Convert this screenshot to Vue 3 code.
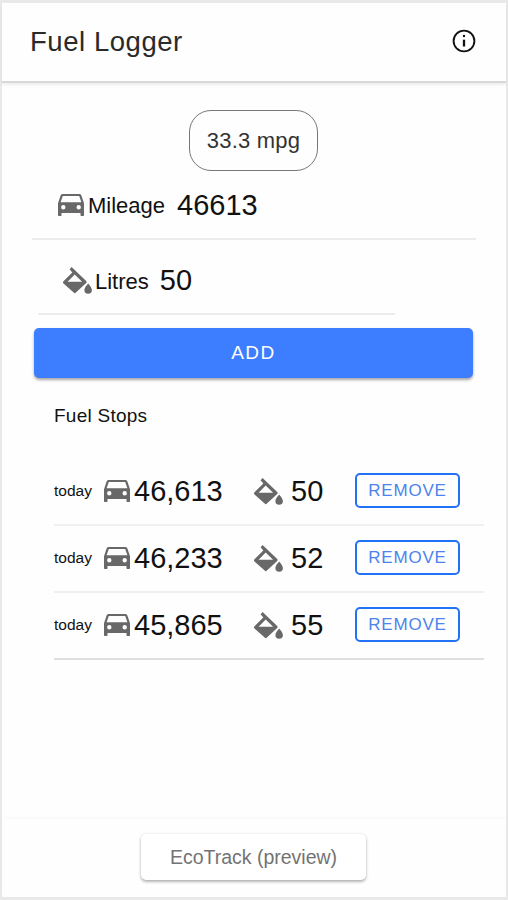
<script setup>
import { ref, h } from 'vue'

const mileage = ref('46613')
const litres = ref('50')
const stops = ref([
  { id: 1, day: 'today', mileage: '46,613', litres: '50' },
  { id: 2, day: 'today', mileage: '46,233', litres: '52' },
  { id: 3, day: 'today', mileage: '45,865', litres: '55' },
])

const remove = (id) => {
  stops.value = stops.value.filter((s) => s.id !== id)
}

const CarIcon = () =>
  h('svg', { viewBox: '0 0 26 22' }, [
    h('path', {
      fill: 'currentColor',
      'fill-rule': 'evenodd',
      d: 'M4.7 0h16.6c1.1 0 1.8.6 2.1 1.5L26 9.2V21c0 .6-.4 1-1 1h-1.5c-.6 0-1-.4-1-1v-2h-19v2c0 .6-.4 1-1 1H1c-.6 0-1-.4-1-1V9.2l2.6-7.7C2.9.6 3.6 0 4.7 0ZM4.8 1.9 2.6 8.2h20.8l-2.2-6.3ZM5.3 11a2.2 2.2 0 1 0 0 4.4 2.2 2.2 0 0 0 0-4.4Zm15.4 0a2.2 2.2 0 1 0 0 4.4 2.2 2.2 0 0 0 0-4.4Z',
    }),
  ])

const FillIcon = () =>
  h('svg', { viewBox: '0 0 29 27' }, [
    h('path', {
      fill: 'currentColor',
      'fill-rule': 'evenodd',
      d: 'M8.6 0 23.2 14.1c.6.7.6 1.2 0 1.9L12.9 25.6c-.7.7-1.5.7-2.2 0L.5 16.4c-.7-.7-.7-1.4 0-2.1l8.8-8.7L6.6 2.3ZM11.7 7.6 4.6 14.7h14.5Z',
    }),
    h('path', {
      fill: 'currentColor',
      d: 'M25.2 16.6s-3.8 4-3.8 6.4a3.75 3.75 0 0 0 7.5 0c0-2.4-3.7-6.4-3.7-6.4Z',
    }),
  ])
</script>

<template>
  <div class="screen">
    <header class="toolbar">
      <h1>Fuel Logger</h1>
      <button class="info" aria-label="Information">
        <svg viewBox="0 0 24 24">
          <circle cx="12" cy="12" r="10.4" fill="none" stroke="currentColor" stroke-width="1.9" />
          <circle cx="12" cy="7" r="1.2" fill="currentColor" />
          <path d="M12 10.7v6.8" stroke="currentColor" stroke-width="2.3" />
        </svg>
      </button>
    </header>

    <main>
      <div class="economy">33.3 mpg</div>

      <div class="field mileage">
        <CarIcon class="car" />
        <span class="label">Mileage</span>
        <span class="value">{{ mileage }}</span>
      </div>
      <div class="field litres">
        <FillIcon class="fill" />
        <span class="label">Litres</span>
        <span class="value">{{ litres }}</span>
      </div>

      <button class="add">ADD</button>

      <h2>Fuel Stops</h2>
      <ul>
        <li v-for="stop in stops" :key="stop.id">
          <span class="day">{{ stop.day }}</span>
          <CarIcon class="car" />
          <span class="value reading">{{ stop.mileage }}</span>
          <FillIcon class="fill" />
          <span class="value volume">{{ stop.litres }}</span>
          <button class="remove" @click="remove(stop.id)">REMOVE</button>
        </li>
      </ul>
    </main>

    <footer>
      <button class="preview">EcoTrack (preview)</button>
    </footer>
  </div>
</template>

<style>
body {
  margin: 0;
  background: #fff;
}
</style>

<style scoped>
.screen {
  box-sizing: border-box;
  width: 508px;
  height: 900px;
  display: flex;
  flex-direction: column;
  border: 2px solid #e9e9e9;
  border-top-width: 3px;
  border-bottom-width: 3px;
  background: #fefefe;
  color: #111;
  font-family: "Liberation Sans", Arial, sans-serif;
}
button {
  font-family: inherit;
  padding: 0;
  margin: 0;
  border: 0;
  background: none;
}
svg {
  display: block;
  flex: none;
}
.toolbar {
  box-sizing: border-box;
  height: 80px;
  flex: none;
  display: flex;
  align-items: center;
  justify-content: space-between;
  padding: 0 30.5px 3px 28px;
  border-bottom: 2px solid #d8d8d8;
  box-shadow: 0 2px 3px rgba(0, 0, 0, 0.07);
}
h1 {
  margin: 0;
  padding-top: 2px;
  font-size: 27.5px;
  font-weight: 400;
  letter-spacing: 0.55px;
  color: #2a2a2a;
}
.info {
  color: #111;
}
.info svg {
  width: 24px;
  height: 24px;
}
main {
  flex: 1;
  padding: 27px 21px 0 30px;
}
.economy {
  box-sizing: border-box;
  width: 129px;
  height: 61px;
  margin: 0 0 1px 157px;
  display: flex;
  align-items: center;
  justify-content: center;
  border: 1.5px solid #777;
  border-radius: 22px;
  font-size: 22px;
  letter-spacing: 0.2px;
  color: #333;
}
.field {
  box-sizing: border-box;
  display: flex;
  align-items: center;
  border-bottom: 2px solid #ececec;
}
.field .label {
  padding-top: 2px;
  font-size: 22px;
}
.mileage {
  width: 444px;
  height: 68px;
  padding-left: 26px;
}
.mileage .label {
  margin-left: 4px;
}
.value {
  font-size: 29px;
}
.field .value {
  margin-left: 12px;
}
.litres {
  width: 357px;
  height: 75px;
  margin-left: 6px;
  padding: 8px 0 0 25px;
}
.litres .label {
  margin-left: 3px;
}
.litres .value {
  margin-left: 11px;
}
.car {
  width: 26px;
  height: 22px;
  color: #686868;
}
.fill {
  width: 29px;
  height: 27px;
  color: #686868;
}
.add {
  display: block;
  width: 439px;
  height: 50px;
  margin: 13px 0 0 2px;
  border-radius: 5px;
  background: #3c7eff;
  box-shadow: 0 2px 3px rgba(0, 0, 0, 0.35);
  color: #fff;
  font-size: 19px;
  letter-spacing: 1.5px;
}
h2 {
  margin: 27px 0 0 22px;
  font-size: 19px;
  line-height: 22px;
  font-weight: 400;
  letter-spacing: 0.25px;
}
ul {
  list-style: none;
  margin: 32px 0 0 22px;
  padding: 0;
}
li {
  box-sizing: border-box;
  height: 67px;
  width: 430px;
  display: flex;
  align-items: center;
  border-bottom: 2px solid #f0f0f0;
}
li:last-child {
  border-bottom-color: #dfdfdf;
}
li svg {
  margin-bottom: 1px;
}
.day {
  width: 50px;
  padding-bottom: 2px;
  font-size: 15.5px;
}
.reading {
  width: 120px;
  margin-left: 4px;
}
.volume {
  width: 64px;
  margin-left: 8px;
}
.remove {
  box-sizing: border-box;
  width: 105px;
  height: 35px;
  margin-bottom: 2px;
  border: 2px solid #2272f5;
  border-radius: 5px;
  color: #4d83ed;
  font-size: 17px;
  letter-spacing: 0.8px;
}
footer {
  box-sizing: border-box;
  flex: none;
  height: 78px;
  display: flex;
  justify-content: center;
  align-items: flex-start;
  padding: 15px 1px 0 0;
  box-shadow: 0 -2px 4px rgba(0, 0, 0, 0.025);
}
.preview {
  width: 225px;
  height: 46px;
  border-radius: 5px;
  background: #fff;
  box-shadow: 0 2px 3px rgba(0, 0, 0, 0.27), 0 0 3px rgba(0, 0, 0, 0.1);
  color: #737373;
  font-size: 19.5px;
}
</style>
